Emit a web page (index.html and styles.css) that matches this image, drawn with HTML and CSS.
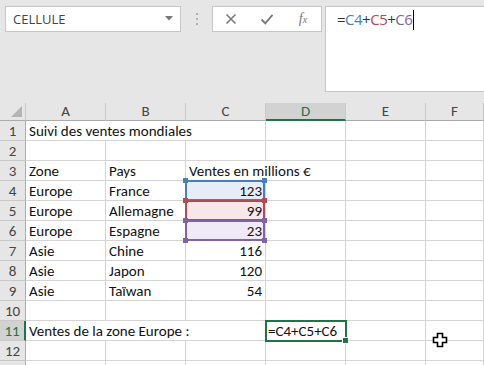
FILE: index.html
```html
<!DOCTYPE html>
<html lang="fr">
<head>
    <meta charset="UTF-8">
    <title>Ventes mondiales</title>
    <link rel="stylesheet" href="styles.css">
</head>
<body>
    <div class="app">
        <!-- Barre de formule -->
        <div class="formula-bar">
            <div class="name-box">
                <span>CELLULE</span>
                <svg class="name-arrow" width="8" height="5" viewBox="0 0 8 5"><path d="M0 0h8L4 4.5z" fill="#777"/></svg>
            </div>
            <div class="grip"><i></i><i></i><i></i></div>
            <div class="fx-buttons">
                <span class="btn"><svg width="12" height="12" viewBox="0 0 12 12"><path d="M1.5 1.5l9 9M10.5 1.5l-9 9" stroke="#7a7a7a" stroke-width="1.6"/></svg></span>
                <span class="btn"><svg width="14" height="12" viewBox="0 0 14 12"><path d="M1.5 6.5l3.8 3.8L12.5 1.8" fill="none" stroke="#7a7a7a" stroke-width="1.8"/></svg></span>
                <span class="btn fx">f<sub>x</sub></span>
            </div>
            <div class="formula-input">=<span class="c-blue">C4</span>+<span class="c-red">C5</span>+<span class="c-purple">C6</span><span class="caret"></span></div>
        </div>

        <!-- Feuille -->
        <div class="sheet">
            <div class="hd corner"><span class="tri"></span></div>
            <div class="hd">A</div>
            <div class="hd">B</div>
            <div class="hd">C</div>
            <div class="hd hd-sel">D</div>
            <div class="hd">E</div>
            <div class="hd">F</div>

            <div class="rh">1</div><div class="c span3">Suivi des ventes mondiales</div><div class="c"></div><div class="c"></div><div class="c"></div>
            <div class="rh">2</div><div class="c"></div><div class="c"></div><div class="c"></div><div class="c"></div><div class="c"></div><div class="c"></div>
            <div class="rh">3</div><div class="c">Zone</div><div class="c">Pays</div><div class="c span2">Ventes en millions €</div><div class="c"></div><div class="c"></div>
            <div class="rh">4</div><div class="c">Europe</div><div class="c">France</div><div class="c num ref ref-blue">123<i class="h tl"></i><i class="h tr"></i><i class="h bl"></i><i class="h br"></i></div><div class="c"></div><div class="c"></div><div class="c"></div>
            <div class="rh">5</div><div class="c">Europe</div><div class="c">Allemagne</div><div class="c num ref ref-red">99<i class="h tl"></i><i class="h tr"></i><i class="h bl"></i><i class="h br"></i></div><div class="c"></div><div class="c"></div><div class="c"></div>
            <div class="rh">6</div><div class="c">Europe</div><div class="c">Espagne</div><div class="c num ref ref-purple">23<i class="h tl"></i><i class="h tr"></i><i class="h bl"></i><i class="h br"></i></div><div class="c"></div><div class="c"></div><div class="c"></div>
            <div class="rh">7</div><div class="c">Asie</div><div class="c">Chine</div><div class="c num">116</div><div class="c"></div><div class="c"></div><div class="c"></div>
            <div class="rh">8</div><div class="c">Asie</div><div class="c">Japon</div><div class="c num">120</div><div class="c"></div><div class="c"></div><div class="c"></div>
            <div class="rh">9</div><div class="c">Asie</div><div class="c">Taïwan</div><div class="c num">54</div><div class="c"></div><div class="c"></div><div class="c"></div>
            <div class="rh">10</div><div class="c"></div><div class="c"></div><div class="c"></div><div class="c"></div><div class="c"></div><div class="c"></div>
            <div class="rh rh-sel">11</div><div class="c span3">Ventes de la zone Europe :</div><div class="c active">=C4+C5+C6<i class="fill"></i></div><div class="c"></div><div class="c"></div>
            <div class="rh">12</div><div class="c"></div><div class="c"></div><div class="c"></div><div class="c"></div><div class="c"></div><div class="c"></div>
            <div class="rh"></div><div class="c"></div><div class="c"></div><div class="c"></div><div class="c"></div><div class="c"></div><div class="c"></div>
        </div>

        <!-- Curseur de la souris -->
        <svg class="mouse" width="16" height="16" viewBox="0 0 16 16">
            <path d="M5.5 1.5h5v4h4v5h-4v4h-5v-4h-4v-5h4z" fill="#fff" stroke="#000" stroke-width="1.6"/>
        </svg>
    </div>
</body>
</html>
```

FILE: styles.css
```css
/* Page */
body {
    margin: 0;
    overflow: hidden;
    background-color: #e6e6e6;
    font-family: Carlito, Lato, "Liberation Sans", sans-serif;
}

.app {
    position: relative;
    width: 484px;
    height: 365px;
    overflow: hidden;
}

/* === BARRE DE FORMULE === */
.formula-bar {
    display: flex;
    align-items: flex-start;
    height: 103px;
    padding: 6px 0 0 5px;
    box-sizing: border-box;
}

.name-box {
    width: 176px;
    height: 26px;
    box-sizing: border-box;
    background: #fff;
    border: 1px solid #c6c6c6;
    display: flex;
    align-items: center;
    justify-content: space-between;
    padding: 0 7px 0 7px;
    font-family: "Open Sans", "Noto Sans", sans-serif;
    font-size: 13px;
    color: #444;
}

.name-arrow {
    margin-top: -2px;
}

.grip {
    width: 31px;
    display: flex;
    flex-direction: column;
    align-items: center;
    gap: 3px;
    padding-top: 7px;
}

.grip i {
    width: 2px;
    height: 2px;
    background: #b0b0b0;
}

.fx-buttons {
    width: 110px;
    height: 26px;
    box-sizing: border-box;
    background: #fff;
    border: 1px solid #c6c6c6;
    display: flex;
    align-items: center;
}

.btn {
    flex: 0 0 36px;
    display: flex;
    justify-content: center;
    align-items: center;
}

.fx {
    font-family: "Liberation Serif", serif;
    font-style: italic;
    font-size: 14px;
    color: #777;
}

.fx sub {
    font-size: 10px;
    vertical-align: -1px;
}

.formula-input {
    flex: 1;
    height: 86px;
    margin-left: 3px;
    box-sizing: border-box;
    background: #fff;
    border: 1px solid #c6c6c6;
    border-right: none;
    padding: 2px 0 0 11px;
    font-family: "Open Sans", "Noto Sans", sans-serif;
    font-size: 15px;
    letter-spacing: -0.5px;
    color: #333;
    line-height: 20px;
}

.c-blue { color: #4a7ebb; }
.c-red { color: #b04a55; }
.c-purple { color: #8064a2; }

.caret {
    display: inline-block;
    width: 1px;
    height: 20px;
    margin-left: 1px;
    background: #000;
    vertical-align: -5px;
}

/* === FEUILLE === */
.sheet {
    display: grid;
    grid-template-columns: 26px repeat(5, 80px) 1fr;
    grid-template-rows: 18px;
    grid-auto-rows: 20px;
}

.hd, .rh, .c {
    box-sizing: border-box;
    border-right: 1px solid #d4d4d4;
    border-bottom: 1px solid #d4d4d4;
    font-size: 15px;
    white-space: nowrap;
}

.hd {
    background: #e6e6e6;
    border-right-color: #c9c9c9;
    border-bottom-color: #ababab;
    color: #444;
    text-align: center;
    line-height: 17px;
}

.hd-sel {
    background: #d2d2d2;
    color: #217346;
    border-bottom: 2px solid #217346;
}

.corner {
    position: relative;
}

.tri {
    position: absolute;
    right: 3px;
    bottom: 3px;
    width: 0;
    height: 0;
    border-left: 11px solid transparent;
    border-bottom: 11px solid #b4b4b4;
}

.rh {
    background: #e6e6e6;
    border-right-color: #ababab;
    border-bottom-color: #c9c9c9;
    color: #444;
    text-align: center;
    line-height: 20px;
}

.rh-sel {
    background: #d2d2d2;
    color: #217346;
    border-right: 2px solid #217346;
}

.c {
    background: #fff;
    color: #111;
    padding: 0 3px;
    line-height: 21px;
}

/* Texte qui déborde sur les cellules vides voisines */
.span2 { grid-column: span 2; }
.span3 { grid-column: span 3; }

.num {
    text-align: right;
}

/* Plages de référence */
.ref {
    position: relative;
}

.ref::after {
    content: "";
    position: absolute;
    top: -1px;
    left: -1px;
    right: 0;
    bottom: -1px;
    border: 2px solid;
}

.ref-blue { background: #e6edf7; }
.ref-red { background: #f8e7e9; }
.ref-purple { background: #efeaf5; }

.ref-blue::after { border-color: #4a7ebb; }
.ref-red::after { border-color: #b04a55; }
.ref-purple::after { border-color: #8064a2; }

.h {
    position: absolute;
    width: 5px;
    height: 5px;
    z-index: 2;
}

.ref-blue .h { background: #4a7ebb; }
.ref-red .h { background: #b04a55; }
.ref-purple .h { background: #8064a2; }

.tl { top: -3px; left: -3px; }
.tr { top: -3px; right: -2px; }
.bl { bottom: -3px; left: -3px; }
.br { bottom: -3px; right: -2px; }

/* Cellule active */
.active {
    position: relative;
    padding-left: 2px;
}

.active::after {
    content: "";
    position: absolute;
    top: -1px;
    left: -1px;
    right: -2px;
    bottom: -2px;
    border: 2px solid #217346;
}

.fill {
    position: absolute;
    right: -4px;
    bottom: -4px;
    width: 5px;
    height: 5px;
    background: #217346;
    border: 1px solid #fff;
    z-index: 2;
}

/* Curseur */
.mouse {
    position: absolute;
    left: 432px;
    top: 332px;
}
```
